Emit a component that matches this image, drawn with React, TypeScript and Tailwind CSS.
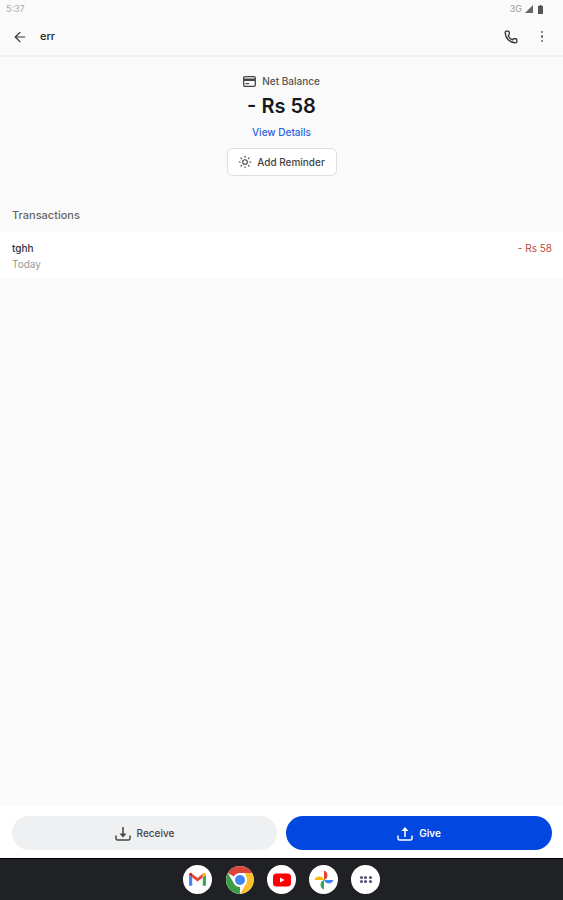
import { ArrowLeft, Phone, Sun } from "lucide-react";

function Gmail() {
  return (
    <svg width="19" height="15" viewBox="0 0 18 14">
      <path d="M1 13h3V5L1 2.500z" fill="#4285f4" />
      <path d="M14 13h3V2.500L14 5z" fill="#34a853" />
      <path d="M4 5V1.500L9 5.500l5-4V5L9 9z" fill="#ea4335" />
      <path d="M1 2.500C1 .8 2.800 0 4 1.200V5z" fill="#c5221f" />
      <path d="M14 1.200C15.200 0 17 .8 17 2.500L14 5z" fill="#fbbc04" />
    </svg>
  );
}

function Chrome() {
  return (
    <svg width="28" height="28" viewBox="0 0 28 28">
      <circle cx="14" cy="14" r="14" fill="#fff" />
      <path d="M14 0a14 14 0 0 1 12.100 7H14a7 7 0 0 0-6.100 3.500L1.900 7A14 14 0 0 1 14 0z" fill="#db4437" />
      <path d="M26.100 7A14 14 0 0 1 14 28l6.100-10.500A7 7 0 0 0 20 10.500L19 7z" fill="#fbc02d" />
      <path d="M1.900 7l6 10.500A7 7 0 0 0 14 21l-0.100 7A14 14 0 0 1 1.900 7z" fill="#3f9c46" />
      <circle cx="14" cy="14" r="6.500" fill="#fff" />
      <circle cx="14" cy="14" r="5" fill="#4285f4" />
    </svg>
  );
}

function YouTube() {
  return (
    <svg width="18" height="14" viewBox="0 0 18 14">
      <rect x="0" y="0.500" width="18" height="13" rx="3.500" fill="#f00" />
      <path d="M7 4.500v5l4.500-2.500z" fill="#fff" />
    </svg>
  );
}

function Photos() {
  return (
    <svg width="20" height="20" viewBox="0 0 20 20">
      <path d="M10 10V0.500a5 5 0 0 1 0 9.500z" fill="#ea4335" />
      <path d="M10 10h9.500a5 5 0 0 1-9.500 0z" fill="#4285f4" />
      <path d="M10 10v9.500a5 5 0 0 1 0-9.500z" fill="#34a853" />
      <path d="M10 10H0.500a5 5 0 0 1 9.500 0z" fill="#fbbc04" />
    </svg>
  );
}

function Apps() {
  return (
    <div className="grid grid-cols-3 gap-[1.500px]">
      {[0, 1, 2, 3, 4, 5].map((i) => (
        <span key={i} className="w-[3px] h-[3px] rounded-full bg-[#4a4f7a]" />
      ))}
    </div>
  );
}

function Card() {
  return (
    <svg width="13" height="11" viewBox="0 0 13 11" className="text-[#444]">
      <rect x="0.700" y="0.700" width="11.600" height="9.600" rx="1.200" fill="none" stroke="currentColor" strokeWidth="1.300" />
      <rect x="1" y="2.500" width="11" height="2.500" fill="currentColor" />
      <rect x="2.500" y="7" width="3.500" height="1.200" fill="currentColor" />
    </svg>
  );
}

function Tray({ up }: { up?: boolean }) {
  return (
    <svg width="16" height="15" viewBox="0 0 16 15" fill="none" stroke="currentColor" strokeWidth="1.500">
      <path d="M1 9.500V12.500a1.500 1.500 0 0 0 1.500 1.500h11a1.500 1.500 0 0 0 1.500-1.500V9.500" />
      {up ? (
        <>
          <path d="M8 11V3" />
          <path d="M4.500 5L8 1l3.500 4z" fill="currentColor" stroke="none" />
        </>
      ) : (
        <>
          <path d="M8 1v8" />
          <path d="M4.500 7.500L8 11.500l3.500-4z" fill="currentColor" stroke="none" />
        </>
      )}
    </svg>
  );
}

function DockIcon({ children, bare }: { children: React.ReactNode; bare?: boolean }) {
  return (
    <div className={`w-[29px] h-[29px] rounded-full flex items-center justify-center overflow-hidden ${bare ? "" : "bg-white"}`}>
      {children}
    </div>
  );
}

export default function App() {
  return (
    <div
      className="w-[563px] h-[900px] flex flex-col bg-[#fafafa] text-[#1f2328] overflow-hidden"
      style={{ fontFamily: "Inter, 'Liberation Sans', sans-serif" }}
    >
      <div className="h-[18px] shrink-0 flex items-center justify-between pl-[6px] pr-[20px] text-[9px] text-[#aaa]">
        <span>5:37</span>
        <div className="flex items-center text-[#999]">
          <span>3G</span>
          <svg width="8" height="8" viewBox="0 0 8 8" className="ml-[3px]">
            <path d="M0 8L8 0v8z" fill="#666" />
          </svg>
          <svg width="5" height="9" viewBox="0 0 5 9" className="ml-[5px]">
            <path d="M1.500 0h2v1H5v8H0V1h1.500z" fill="#555" />
          </svg>
        </div>
      </div>

      <div className="h-[39px] shrink-0 flex items-center pl-[12px] pr-[20px] border-b-2 border-[#f1f1f1]">
        <ArrowLeft size={16} strokeWidth={1.800} className="text-[#333]" />
        <span className="ml-[12px] text-[11px] font-medium">err</span>
        <Phone size={14} strokeWidth={2.200} className="ml-auto text-[#333]" />
        <div className="ml-[23px] flex flex-col gap-[2px]">
          <span className="w-[2.500px] h-[2.500px] bg-[#666] rounded-full" />
          <span className="w-[2.500px] h-[2.500px] bg-[#666] rounded-full" />
          <span className="w-[2.500px] h-[2.500px] bg-[#666] rounded-full" />
        </div>
      </div>

      <div className="flex flex-col items-center pt-[16px]">
        <div className="flex items-center gap-[6px] h-[16px] text-[10px] text-[#555] font-medium">
          <Card />
          <span>Net Balance</span>
        </div>
        <div className="mt-[4px] h-[26px] flex items-center text-[20px] font-semibold text-[#16191d]">- Rs 58</div>
        <div className="mt-[6px] h-[14px] flex items-center text-[10px] font-medium text-[#2f62e0]">View Details</div>
        <button className="mt-[9px] w-[110px] h-[28px] flex items-center justify-center gap-[5px] bg-white border border-[#dedede] rounded-[6px] text-[10px] font-medium text-[#444]">
          <Sun size={14} strokeWidth={1.800} />
          <span>Add Reminder</span>
        </button>
      </div>

      <div className="mt-[32px] pl-[12px] h-[14px] flex items-center text-[11px] font-medium text-[#666]">Transactions</div>

      <div className="mt-[10px] h-[47px] shrink-0 bg-white flex justify-between pl-[12px] pr-[11px] pt-[9px]">
        <div className="flex flex-col">
          <span className="text-[10px] h-[14px] flex items-center text-[#333] font-medium">tghh</span>
          <span className="text-[10px] h-[14px] mt-[2px] flex items-center text-[#999]">Today</span>
        </div>
        <span className="text-[10px] h-[14px] flex items-center text-[#b5473f]">- Rs 58</span>
      </div>

      <div className="flex-1" />

      <div className="h-[52px] shrink-0 bg-white flex gap-[9px] pl-[12px] pt-[10px]">
        <button className="w-[265px] h-[34px] rounded-full bg-[#eef0f2] flex items-center justify-center gap-[6px] text-[10px] font-medium text-[#444]">
          <Tray />
          <span>Receive</span>
        </button>
        <button className="w-[266px] h-[34px] rounded-full bg-[#0247e0] flex items-center justify-center gap-[6px] text-[10px] font-semibold text-white">
          <Tray up />
          <span>Give</span>
        </button>
      </div>

      <div className="h-[42px] shrink-0 bg-[#202124] border-t border-black flex items-center justify-center gap-[13px]">
        <DockIcon><Gmail /></DockIcon>
        <DockIcon bare><Chrome /></DockIcon>
        <DockIcon><YouTube /></DockIcon>
        <DockIcon><Photos /></DockIcon>
        <DockIcon><Apps /></DockIcon>
      </div>
    </div>
  );
}
